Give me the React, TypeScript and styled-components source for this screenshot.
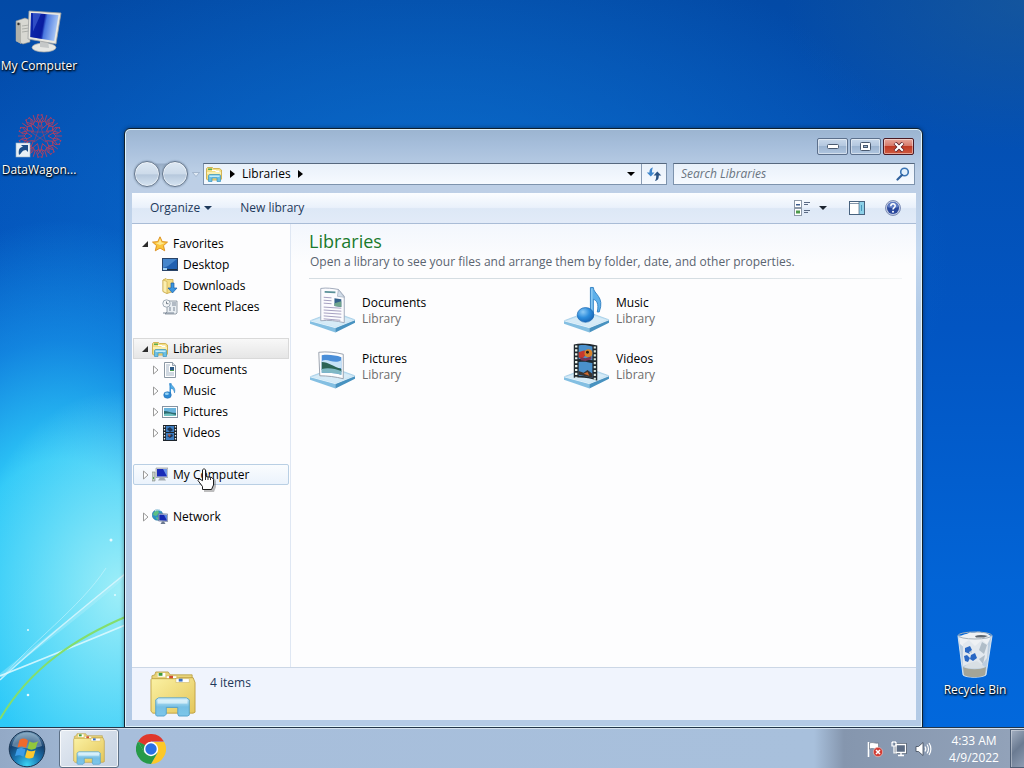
import React from "react";
import styled, { createGlobalStyle, css } from "styled-components";

const GlobalStyle = createGlobalStyle`
  *, *::before, *::after { box-sizing: border-box; }
  body {
    margin: 0;
    font-family: "Open Sans", "Noto Sans", sans-serif;
    font-size: 12px;
    line-height: 16px;
    color: #000;
  }
  button, input { font: inherit; color: inherit; }
  svg { display: block; flex: none; }
  ul { list-style: none; margin: 0; padding: 0; }
`;

/* ---------- desktop ---------- */

const Screen = styled.div`
  display: flex;
  flex-direction: column;
  min-height: 100vh;
`;

const Desktop = styled.main`
  position: relative;
  flex: 1;
  overflow: hidden;
  background:
    radial-gradient(ellipse 150px 200px at 120px 590px, rgba(170, 242, 248, 0.9), rgba(130, 232, 248, 0) 100%),
    radial-gradient(ellipse 260px 400px at 60px 620px, #2cccf8 0, rgba(48, 206, 250, 0.95) 40%, rgba(28, 160, 240, 0.6) 70%, rgba(16, 130, 226, 0) 100%),
    radial-gradient(ellipse 240px 150px at 100% 0, rgba(36, 96, 150, 0.5), rgba(20, 80, 150, 0) 100%),
    radial-gradient(ellipse 520px 340px at 42% 36%, rgba(14, 120, 212, 0.85), rgba(10, 100, 200, 0) 100%),
    linear-gradient(180deg, #034aa6 0%, #0350b4 20%, #0255c2 45%, #0264d6 80%, #0268dc 100%);
`;

const Streaks = styled.svg`
  position: absolute;
  left: 0;
  bottom: 0;
`;

const Shortcut = styled.a<{ $left?: string; $right?: string; $top?: string; $bottom?: string }>`
  position: absolute;
  left: ${(p) => p.$left ?? "auto"};
  right: ${(p) => p.$right ?? "auto"};
  top: ${(p) => p.$top ?? "auto"};
  bottom: ${(p) => p.$bottom ?? "auto"};
  display: flex;
  flex-direction: column;
  align-items: center;
  gap: 4px;
  width: 80px;
  color: #fff;
  text-decoration: none;
  white-space: nowrap;
  text-shadow: 0 1px 2px #000, 1px 1px 2px #000;
`;

/* ---------- explorer window ---------- */

const Window = styled.section`
  position: absolute;
  top: 128px;
  right: 101px;
  bottom: 0;
  left: 124px;
  display: flex;
  flex-direction: column;
  padding: 0 6px 7px 7px;
  border: 1px solid #10202e;
  border-radius: 6px 6px 0 0;
  background: linear-gradient(180deg, #9bb4d0 0, #a6bedb 16px, #bccfe6 44px, #bdcfe6 62px, #c3d8f0 120px, #b4cce8 180px, #b3cae6 100%);
  box-shadow: inset 0 0 0 1px #e0f4fc, 0 0 4px rgba(0, 0, 0, 0.4);
`;

const Caption = styled.header`
  display: flex;
  justify-content: flex-end;
  gap: 2px;
  padding: 9px 2px 0 0;
  height: 34px;
`;

const CaptionButton = styled.button<{ $close?: boolean }>`
  display: flex;
  align-items: center;
  justify-content: center;
  width: 31px;
  height: 17px;
  padding: 0;
  border: 1px solid ${(p) => (p.$close ? "#4a1a24" : "#5c708c")};
  border-radius: 2px;
  background: ${(p) =>
    p.$close
      ? "linear-gradient(180deg, #e8a89c 0, #d77a6a 45%, #c03a24 50%, #cf5a40 100%)"
      : "linear-gradient(180deg, #c8d8ea 0, #b4c8e0 45%, #9cb4d0 50%, #b0c6e0 100%)"};
  box-shadow: inset 0 0 0 1px rgba(255, 255, 255, 0.45);
`;

const NavRow = styled.div`
  display: flex;
  align-items: center;
  height: 22px;
  margin-bottom: 8px;
  padding-right: 1px;
`;

const TravelButtons = styled.div`
  display: flex;
  gap: 2px;
  margin-left: 2px;
  border-radius: 13px;
  background: linear-gradient(180deg, rgba(120, 142, 168, 0) 2px, rgba(120, 142, 168, 0.5) 3px, rgba(190, 206, 226, 0.4) 55%, rgba(190, 206, 226, 0) 80%);
`;

const TravelButton = styled.button`
  width: 26px;
  height: 26px;
  padding: 0;
  border: 1px solid #66788e;
  border-radius: 50%;
  background: linear-gradient(180deg, #dde8f3 0, #cddbea 48%, #b6c8dc 54%, #d6e4f2 100%);
  box-shadow: inset 0 0 0 1px rgba(255, 255, 255, 0.55), 0 0 2px #6d8098;
`;

const RecentButton = styled.button`
  display: flex;
  justify-content: center;
  width: 15px;
  padding: 0;
  border: 0;
  background: none;
`;

const field = css`
  display: flex;
  align-items: center;
  height: 22px;
  border: 1px solid #7d93ad;
  border-top-color: #56687e;
  background: linear-gradient(180deg, #e9f1fa, #f6faff);
`;

const AddressBar = styled.div`
  ${field}
  flex: 1;
  min-width: 0;
  padding-left: 2px;
`;

const Crumb = styled.button`
  padding: 0;
  border: 0;
  background: none;
  white-space: nowrap;
`;

const CrumbArrow = styled.button`
  display: flex;
  align-items: center;
  justify-content: center;
  width: 20px;
  height: 20px;
  padding: 0;
  border: 0;
  background: none;
`;

const Fill = styled.span`
  flex: 1;
`;

const RefreshButton = styled.button`
  display: flex;
  align-items: center;
  justify-content: center;
  width: 25px;
  height: 20px;
  padding: 0;
  border: 0;
  border-left: 1px solid #8a9cb4;
  background: none;
`;

const SearchBox = styled.label`
  ${field}
  width: 242px;
  margin-left: 6px;
  padding: 0 4px 0 7px;
`;

const SearchInput = styled.input`
  flex: 1;
  min-width: 0;
  padding: 0;
  border: 0;
  outline: 0;
  background: none;
  font-style: italic;
  &::placeholder { color: #6a7480; opacity: 1; }
`;

const Content = styled.div`
  flex: 1;
  display: flex;
  flex-direction: column;
  min-height: 0;
  background: #fdfdfe;
`;

const Toolbar = styled.div`
  display: flex;
  align-items: center;
  height: 31px;
  padding: 0 15px 0 18px;
  border-bottom: 1px solid #a9bcd6;
  background: linear-gradient(180deg, #fbfdff 0, #eaf1fb 48%, #dde8f6 52%, #e2ebf8 100%);
`;

const ToolButton = styled.button<{ $gap?: number }>`
  display: flex;
  align-items: center;
  gap: 4px;
  padding: 0;
  margin-left: ${(p) => p.$gap ?? 0}px;
  border: 0;
  background: none;
  color: #1e395b;
`;

const ViewButton = styled(ToolButton)`
  gap: 8px;
`;

const Panes = styled.div`
  flex: 1;
  display: flex;
  min-height: 0;
`;

const Sidebar = styled.nav`
  display: flex;
  flex-direction: column;
  gap: 21px;
  width: 159px;
  padding: 9px 1px;
  border-right: 1px solid #dfe7f3;
`;

const TreeRow = styled.button<{ $child?: boolean; $state?: "selected" | "hover" }>`
  display: flex;
  align-items: center;
  width: 100%;
  height: 21px;
  padding: 0 0 0 ${(p) => (p.$child ? 17 : 7)}px;
  border: 1px solid transparent;
  background: none;
  text-align: left;
  white-space: nowrap;
  ${(p) =>
    p.$state === "selected" &&
    css`
      border-color: #d9d9d9;
      background: linear-gradient(180deg, #f8f8f8, #e6e6e6);
    `}
  ${(p) =>
    p.$state === "hover" &&
    css`
      border-color: #b9cfe4;
      border-radius: 2px;
      background: linear-gradient(180deg, #fafcfe, #ebf3fc);
    `}
`;

const Twisty = styled.span`
  display: flex;
  width: 11px;
`;

const RowIcon = styled.span`
  display: flex;
  width: 21px;
`;

const Listing = styled.div`
  flex: 1;
  min-width: 0;
  padding: 6px 14px 0 18px;
  background: linear-gradient(180deg, #f3f7fd 0, #fdfdfe 40px);
`;

const Heading = styled.h1`
  margin: 0;
  font-size: 18px;
  font-weight: 400;
  line-height: 22px;
  color: #1a7a2c;
`;

const Blurb = styled.p`
  margin: 2px 0 0 1px;
  color: #5a6470;
`;

const Rule = styled.hr`
  height: 1px;
  margin: 8px 0 7px;
  border: 0;
  background: linear-gradient(90deg, #d5dde2, #d5dde2 70%, #f0f3f5);
`;

const Tiles = styled.ul`
  display: grid;
  grid-template-columns: repeat(auto-fill, 254px);
  grid-auto-rows: 56px;
`;

const Tile = styled.button`
  display: flex;
  gap: 6px;
  padding: 0;
  border: 0;
  background: none;
  text-align: left;
`;

const TileText = styled.span`
  display: flex;
  flex-direction: column;
  padding-top: 9px;
`;

const Muted = styled.span`
  color: #6d6d6d;
`;

const Details = styled.footer`
  display: flex;
  gap: 14px;
  height: 53px;
  padding: 3px 18px;
  border-top: 1px solid #ccd7e6;
  background: #f0f4fd;
  color: #1e395b;
  font-size: 12px;
  line-height: 24px;
`;

/* ---------- taskbar ---------- */

const Taskbar = styled.footer`
  display: flex;
  align-items: center;
  height: 40px;
  border-top: 1px solid #d3e0ee;
  box-shadow: 0 -1px 0 #22354a;
  background: linear-gradient(90deg, #93a9c6 0, #a7bedb 120px, #a8c0dc calc(100% - 210px), #8596ae calc(100% - 180px), #93a3ba 100%);
  z-index: 1;
`;

const StartButton = styled.button`
  display: flex;
  margin-left: 8px;
  padding: 0;
  border: 0;
  border-radius: 50%;
  background: none;
`;

const TaskButton = styled.button<{ $active?: boolean }>`
  display: flex;
  align-items: center;
  justify-content: center;
  width: 60px;
  height: 39px;
  padding: 0;
  border: 1px solid transparent;
  border-radius: 3px;
  background: none;
  ${(p) =>
    p.$active &&
    css`
      margin: 0 2px 0 13px;
      border-color: #5d7086;
      background: linear-gradient(135deg, #e6ecf3 0, #d5deea 45%, #c5d2e2 100%);
      box-shadow: inset 0 0 0 1px rgba(255, 255, 255, 0.75);
    `}
`;

const Tray = styled.div`
  display: flex;
  align-items: center;
  gap: 6px;
  margin-left: auto;
`;

const TrayButton = styled.button`
  display: flex;
  padding: 0;
  border: 0;
  background: none;
`;

const Clock = styled.time`
  width: 72px;
  color: #fff;
  text-align: center;
  line-height: 17px;
`;

const ShowDesktop = styled.button`
  align-self: stretch;
  width: 14px;
  padding: 0;
  border: 1px solid #4f5f76;
  border-right: 0;
  background: linear-gradient(135deg, #a4b0c2 0, #6b7b92 50%, #8d9cb2 100%);
  box-shadow: inset 1px 1px 0 rgba(255, 255, 255, 0.35);
`;

const Pointer = styled.svg`
  position: absolute;
  left: 197px;
  top: 467px;
`;

/* ---------- icons ---------- */

const ComputerIcon = () => (
  <svg width="48" height="44" viewBox="0 0 48 44" aria-hidden="true">
    <defs>
      <linearGradient id="scr" x1="0" y1="0.300" x2="1" y2="0.500">
        <stop offset="0" stopColor="#1232b4" />
        <stop offset="0.450" stopColor="#0a1fa0" />
        <stop offset="0.550" stopColor="#4a78e0" />
        <stop offset="1" stopColor="#b4d0f8" />
      </linearGradient>
    </defs>
    <path d="M1 11l9-3 5 2v22l-7 2-7-3z" fill="#d8d8d2" stroke="#8d8f8c" strokeWidth="0.600" />
    <path d="M1 11l5 2v21l-5-3z" fill="#b0b1ab" />
    <path d="M7 16l7-1M7 19l7-1M7 22l7-1" stroke="#9b9d9a" strokeWidth="0.700" />
    <circle cx="3.500" cy="14" r="1.200" fill="#333" />
    <ellipse cx="29" cy="37.500" rx="12" ry="4.500" fill="#e6e7e4" stroke="#a2a5a4" strokeWidth="0.700" />
    <path d="M25 29l8 1 1 8-9-1z" fill="#c5c8c8" />
    <path d="M14 1l32 2-5 31-28-5z" fill="#e9e8e2" stroke="#9da09f" strokeWidth="0.800" />
    <path d="M16 3l27.500 2-4.300 26-24-4z" fill="url(#scr)" />
    <path d="M30 4l-3 25-11-2V3z" fill="#0719a0" opacity="0.400" />
    <path d="M18 3l8 .6-8 18z" fill="#5a80e8" opacity="0.450" />
  </svg>
);

const WagonIcon = () => (
  <svg width="48" height="48" viewBox="0 0 48 48" aria-hidden="true">
    <g fill="none" stroke="#c43c58" strokeWidth="0.900" opacity="0.900">
      {Array.from({ length: 10 }, (_, i) => (
        <g key={i} transform={`rotate(${i * 36 + 18} 25 26)`}>
          <path d="M25 18l-3-5 1-4-3-4M25 18l3-5-1-4 3-4M17 9l5 4 3-3 3 3 5-4M25 10V4M19 6l2-1M31 6l-2-1" />
        </g>
      ))}
      <path d="M25 15l6 17-15-10h18L19 32z" strokeWidth="0.600" />
    </g>
    <rect x="1" y="33" width="14" height="14" fill="#e8f0f6" stroke="#9fb3c4" strokeWidth="0.600" />
    <path d="M4 45c-1-6 1-8 4-8l-2-2h7v7l-2-2c-4 0-4 3-7 5z" fill="#1c4f8a" />
  </svg>
);

const BinIcon = () => (
  <svg width="40" height="48" viewBox="0 0 40 48" aria-hidden="true">
    <path d="M3 6l5 39c3 3 19 3 23 0l6-39z" fill="#cbd6e0" fillOpacity="0.920" stroke="#eef4f8" strokeWidth="0.800" />
    <path d="M4 8c4-5 8-3 11-6 4 2 9-2 12 1 4-1 7 1 9 4l-4 8-5 4-8-3-8 3-6-5z" fill="#eef1f4" />
    <path d="M8 14l6-4 6 6 7-6 6 5-1 13-6 8-9-3-9 3z" fill="#e2e8ee" />
    <path d="M27 12l5 3-3 9-5-4zM10 20l5-3 2 6zM24 29l6-4-2 9z" fill="#b0bdc8" />
    <path d="M8 37c6 3 17 3 23 0l-1 8c-5 3-16 3-21 0z" fill="#a4a598" />
    <path d="M9 37c6 2 16 2 21 0l-8-6-8 2z" fill="#d8dfe4" />
    <path d="M10 18l5-2 2 4-3 2 1 2-5-2zM16 25l4-2 2 5-4 3-3-2zM9 26l3-1 3 3-2 4-3-1z" fill="#2a68c4" />
    <ellipse cx="20" cy="5.500" rx="17" ry="3.500" fill="none" stroke="#a4b0ba" strokeWidth="1" />
    <path d="M20 6c4-1.500 9-1 13 0l-4 1.500h-8z" fill="#5c6670" />
  </svg>
);

const FolderLibIcon = ({ size }: { size: number }) => (
  <svg width={size} height={size} viewBox="0 0 48 48" aria-hidden="true">
    <defs>
      <linearGradient id="fold" x1="0" y1="0" x2="1" y2="1">
        <stop offset="0" stopColor="#fbf2a4" />
        <stop offset="1" stopColor="#e4c65a" />
      </linearGradient>
      <linearGradient id="stand" x1="0" y1="0" x2="0" y2="1">
        <stop offset="0" stopColor="#d4f0fa" />
        <stop offset="0.500" stopColor="#76bfe4" />
        <stop offset="1" stopColor="#7cc6ea" />
      </linearGradient>
    </defs>
    <path d="M2 9V5l3-1 1-3h13l2 3h23v10z" fill="#e8d37a" stroke="#b59a3c" strokeWidth="0.800" />
    <path d="M8 2h8v4H8z" fill="#fff" />
    <rect x="9" y="2" width="4" height="3" fill="#3f9a3a" />
    <path d="M17 5h11v5H17z" fill="#fff" stroke="#c7ab50" strokeWidth="0.600" />
    <rect x="20" y="5" width="4" height="4" fill="#d24c30" />
    <path d="M2 8h24l4-1h15l2 5v31l-2 1H3l-2-2V9z" fill="url(#fold)" stroke="#bb9c3e" strokeWidth="0.900" />
    <path d="M27 8h14v4H27z" fill="#fff" stroke="#c7ab50" strokeWidth="0.500" />
    <rect x="30" y="8" width="4" height="3" fill="#3a6fc0" />
    <path d="M6 46V30l3-2h29l3 2v16l-2 1h-9l-1-2v-7H17v7l-2 2H7z" fill="url(#stand)" stroke="#4c9cc8" strokeWidth="0.900" />
    <path d="M8 30h31v4H8z" fill="#e6f7fc" opacity="0.700" />
  </svg>
);

const SmallFolderIcon = () => (
  <svg width="16" height="16" viewBox="0 0 16 16" aria-hidden="true">
    <path d="M.5 2.500l1-1h5l1 1h6l2 1.500v9l-1 1h-13l-1-1z" fill="#f4de84" stroke="#c9a63c" strokeWidth="0.800" />
    <path d="M2 2.500h4v1.500H2z" fill="#5cac50" />
    <path d="M6 4h4v1H6z" fill="#fff" />
    <path d="M9.500 4.500h4V6h-4z" fill="#fff" />
    <path d="M1 6h14v2H1z" fill="#fbf0b0" />
    <path d="M2.500 15.500v-6l1-1h10l1 1v6h-3.500V12h-5v3.500z" fill="#6cc0e4" stroke="#3a94c0" strokeWidth="0.700" />
    <path d="M3.500 9.500h10V11h-10z" fill="#c4ecf8" />
  </svg>
);

const StarIcon = () => (
  <svg width="16" height="16" viewBox="0 0 16 16" aria-hidden="true">
    <path d="M8 .8l2.200 4.800 5.300.5-4 3.500 1.200 5.200L8 12.100l-4.700 2.700 1.200-5.200-4-3.500 5.300-.5z" fill="#fbc63c" stroke="#d98a1a" strokeWidth="0.900" />
    <path d="M8 2.500l1.500 4 3.500.5-5 2-4.500-2 3-.5z" fill="#fee890" />
  </svg>
);

const MonitorIcon = () => (
  <svg width="16" height="16" viewBox="0 0 16 16" aria-hidden="true">
    <rect x="0.500" y="1.500" width="15" height="12" fill="#2160b0" stroke="#2a4468" />
    <path d="M1 2h14L6 9l-5 2z" fill="#4686cc" />
    <path d="M1 12h14v1H1z" fill="#1c2c40" />
    <path d="M1 11h4v2H1z" fill="#9fd0f4" />
  </svg>
);

const DownloadsIcon = () => (
  <svg width="16" height="16" viewBox="0 0 16 16" aria-hidden="true">
    <path d="M1 2l3-1.500 1 1h6v12l-6 2-4-2z" fill="#f3dc84" stroke="#c8a644" strokeWidth="0.800" />
    <path d="M1 2l4 1.500v12l-4-2z" fill="#fbeeb0" stroke="#c8a644" strokeWidth="0.600" />
    <path d="M9 5h3v5h3l-4.500 5L6 10h3z" fill="#3a96e0" stroke="#1c5ea8" strokeWidth="0.700" />
  </svg>
);

const RecentIcon = () => (
  <svg width="16" height="16" viewBox="0 0 16 16" aria-hidden="true">
    <path d="M5 2h10v12l-1 1H3l2-2z" fill="#e9eef2" stroke="#7f8c98" strokeWidth="0.800" />
    <path d="M10 4h4M10 6h4M7 9h2M11 9h2M7 11h2M11 11h2M1 14h11" stroke="#6d7c8c" strokeWidth="0.900" />
    <circle cx="4.500" cy="4.500" r="3.700" fill="#f4f6f8" stroke="#8c98a4" strokeWidth="0.800" />
    <path d="M4.500 2.500v2.200h2" fill="none" stroke="#55626e" strokeWidth="0.800" />
  </svg>
);

const DocIcon = () => (
  <svg width="16" height="16" viewBox="0 0 16 16" aria-hidden="true">
    <path d="M2.500.5h8l3 3v12h-11z" fill="#fff" stroke="#7f8c9a" strokeWidth="0.900" />
    <path d="M10.500.5v3h3" fill="#dde6ee" stroke="#7f8c9a" strokeWidth="0.800" />
    <path d="M4 3h4M4 5h3M4 7h3M4 9h3M4 11h8M4 13h8" stroke="#8ca0b4" strokeWidth="0.800" />
    <rect x="8" y="5" width="4" height="4" fill="#2c5a86" />
    <path d="M8 8h4v1H8z" fill="#4a9a50" />
  </svg>
);

const MusicIcon = () => (
  <svg width="16" height="16" viewBox="0 0 16 16" aria-hidden="true">
    <path d="M7.500.5h1.700c.3 3 4.800 3.500 3.300 9.300-.3-2.700-1.300-4-3.300-4.300z" fill="#56b2ea" stroke="#2a7cc0" strokeWidth="0.600" />
    <path d="M7.500 1h1.500v11H7.500z" fill="#3a94d8" />
    <ellipse cx="5.500" cy="12" rx="3.800" ry="3.300" fill="#2f8ad4" stroke="#1c64a8" strokeWidth="0.500" />
    <ellipse cx="4.800" cy="10.800" rx="2" ry="1.200" fill="#9ad4f4" />
  </svg>
);

const PictureIcon = () => (
  <svg width="16" height="16" viewBox="0 0 16 16" aria-hidden="true">
    <rect x="0.500" y="2.500" width="15" height="11" fill="#fff" stroke="#8593a2" />
    <rect x="2" y="4" width="12" height="8" fill="#6ab4dc" />
    <path d="M2 7c4 0 7 2 12 2v3H2z" fill="#2c6a70" />
    <path d="M2 10c5-1 8 0 12 1v1H2z" fill="#6fc0c0" />
  </svg>
);

const FilmIcon = () => (
  <svg width="16" height="16" viewBox="0 0 16 16" aria-hidden="true">
    <path d="M1 0h14v16H1z" fill="#1c242c" />
    <path d="M4 1h8v6H4zM4 8h8v7H4z" fill="#3c7cc0" />
    <path d="M5 4l3-2 3 3-3 2zM5 11l3 2 3-2-1-2z" fill="#1d3350" />
    <path d="M6 9l3 1-2 2z" fill="#c05a3a" />
    <path d="M2.500 1v15M13.500 1v15" stroke="#e8eef2" strokeWidth="1.300" strokeDasharray="1.500 1.500" />
  </svg>
);

const SmallComputerIcon = () => (
  <svg width="16" height="16" viewBox="0 0 16 16" aria-hidden="true">
    <path d="M0 5h3v9H0z" fill="#c9cfc8" stroke="#7d8680" strokeWidth="0.600" />
    <path d="M1 10h1v2H1z" fill="#50a850" />
    <path d="M4 1h12v9.500H4z" fill="#d4d8dc" stroke="#8a9096" strokeWidth="0.600" />
    <path d="M5 2h10v7.500H5z" fill="#1a2cb8" />
    <path d="M11 2h4v7.500z" fill="#6c94e8" />
    <path d="M8 10.500h4l2 3H6z" fill="#a4abb2" />
  </svg>
);

const NetworkIcon = () => (
  <svg width="16" height="16" viewBox="0 0 16 16" aria-hidden="true">
    <circle cx="5.500" cy="6" r="5.300" fill="#2c92c4" stroke="#1c6a98" strokeWidth="0.500" />
    <path d="M2 3l4-2 1 3-3 3-3-1zM4 8l3 1-2 2z" fill="#5cc084" />
    <path d="M3 2c2-1.500 4-1.500 6 0" stroke="#d8f4fc" strokeWidth="1" fill="none" />
    <path d="M6.500 4.500l9.200.5v7.500l-9.200-.5z" fill="#c8d0dc" stroke="#5a6a8a" strokeWidth="0.600" />
    <path d="M7.300 5.500l7.600.4v5.800l-7.600-.4z" fill="#1428b0" />
    <path d="M12 6h3v5.500z" fill="#5a84e0" />
    <path d="M10 12.500h2l1.500 2.500h-5z" fill="#6a7890" />
  </svg>
);

const Base = () => (
  <>
    <path d="M1 35l24-9 22 8-20 11z" fill="#c4e2f4" stroke="#8cc0de" strokeWidth="0.600" />
    <path d="M1 35l26 7v5L1 38z" fill="#84bfe2" />
    <path d="M27 42l20-8v3L27 47z" fill="#4892c0" />
    <path d="M4 35l21-7 19 6-17 7z" fill="#d6ebf7" />
    <path d="M1 35l26 7 20-8" fill="none" stroke="#f2fafe" strokeWidth="0.800" />
  </>
);

const DocumentsTile = () => (
  <svg width="47" height="48" viewBox="0 0 48 48" aria-hidden="true">
    <Base />
    <path d="M12 2c6-1 12 0 18 1l6 7v27c-8-2-16-3-24-2z" fill="#fbfbfe" stroke="#97a2b4" strokeWidth="0.900" />
    <path d="M30 3l6 8-7-1z" fill="#d3deea" stroke="#97a2b4" strokeWidth="0.600" />
    <path d="M16 5.500l11 .5" stroke="#5a9098" strokeWidth="1.600" />
    <path d="M15 11l8 .6M15 14l8 .6M15 17l8 .6M15 21l18 1.200M15 24l18 1.200M15 27l18 1.200M15 30l18 1.500M15 33l17 1.500" stroke="#9a94b8" strokeWidth="0.900" />
    <path d="M26 12l7 1v8l-7-1z" fill="#33608a" />
    <path d="M26 17l7-2v6l-7-1z" fill="#6fa48c" />
  </svg>
);

const MusicTile = () => (
  <svg width="47" height="48" viewBox="0 0 48 48" aria-hidden="true">
    <defs>
      <radialGradient id="note" cx="0.350" cy="0.300" r="0.800">
        <stop offset="0" stopColor="#8ccaf6" />
        <stop offset="0.500" stopColor="#2c8cdc" />
        <stop offset="1" stopColor="#1560b0" />
      </radialGradient>
    </defs>
    <Base />
    <path d="M28 1h3c0 7 12 9 6 25h-2c2-9-1-12-4-13v18h-3z" fill="#5eb0ea" stroke="#2b7cc0" strokeWidth="0.900" />
    <path d="M29 2h1v26h-1z" fill="#a6d8f8" />
    <ellipse cx="23" cy="29" rx="8.500" ry="7.500" fill="url(#note)" stroke="#1c66b0" strokeWidth="0.700" />
  </svg>
);

const PicturesTile = () => (
  <svg width="47" height="48" viewBox="0 0 48 48" aria-hidden="true">
    <Base />
    <path d="M10 10c8-1 17 0 25 2v25c-8-2-16-3-24-3z" fill="#fdfdfe" stroke="#8f99a6" strokeWidth="0.900" />
    <path d="M13 13c7-1 14 0 20 2v18c-7-2-13-2-20-2z" fill="#4a8ed8" />
    <path d="M13 19c6-4 12 4 20-1v8H13z" fill="#c6e2f6" />
    <path d="M13 20c7 0 12 5 20 7v3l-20-2z" fill="#2c6454" />
    <path d="M13 27c7-2 14 0 20 2v4c-7-2-13-2-20-2z" fill="#7fb8c4" />
  </svg>
);

const VideosTile = () => (
  <svg width="47" height="48" viewBox="0 0 48 48" aria-hidden="true">
    <Base />
    <path d="M11 2c7-2 16-1 24 1v36c-8-3-16-4-24-3z" fill="#20282e" />
    <path d="M16 3c5-1 10 0 14 1v14c-5-1-9-2-14-1z" fill="#4a90cc" />
    <path d="M16 20c5-1 10 0 14 1v15c-5-1-9-2-14-2z" fill="#4a90cc" />
    <path d="M16 10l6-2 1 5-4 4-3-2z" fill="#c8382c" />
    <circle cx="26" cy="11" r="4" fill="#d8842c" />
    <path d="M16 29l5 2 4-3 5 4v4l-14-3z" fill="#3a3430" />
    <path d="M21 32l4-2 2 4z" fill="#d06a30" />
    <circle cx="25" cy="10" r="1.500" fill="#241c18" />
    <path d="M18 15l5 1 6-2v3l-6 2-5-1z" fill="#7a3454" />
    <path d="M13.500 3v33" stroke="#eef6ee" strokeWidth="2.400" strokeDasharray="2.200 1.800" />
    <path d="M32.500 4v34" stroke="#dce8e0" strokeWidth="2.200" strokeDasharray="2.200 1.800" />
  </svg>
);

const DownArrow = ({ color = "#1e395b" }: { color?: string }) => (
  <svg width="8" height="4" viewBox="0 0 8 4" aria-hidden="true">
    <path d="M0 0h8L4 4z" fill={color} />
  </svg>
);

const RightArrow = () => (
  <svg width="5" height="8" viewBox="0 0 5 8" aria-hidden="true">
    <path d="M0 0l5 4-5 4z" fill="#000" />
  </svg>
);

const TwistyIcon = ({ open }: { open: boolean }) => (
  <svg width="8" height="10" viewBox="0 0 8 10" aria-hidden="true">
    {open ? (
      <path d="M7 2v6H1z" fill="#2c2c2c" />
    ) : (
      <path d="M2.500 1v8L7 5z" fill="#fff" stroke="#9a9a9a" />
    )}
  </svg>
);

const RefreshIcon = () => (
  <svg width="16" height="16" viewBox="0 0 16 16" aria-hidden="true">
    <path d="M7 1.500C4 2 3.500 4 3.500 6.500H.8l4 4 3.700-4H6c0-2.500.2-3.500 1-5z" fill="#3f86cc" />
    <path d="M9 15c3.200-.5 3.800-2.500 3.800-5.500h2.500l-4-4-3.700 4H10.200c0 2.500-.3 4-1.200 5.500z" fill="#2c5484" />
  </svg>
);

const LensIcon = () => (
  <svg width="14" height="14" viewBox="0 0 14 14" aria-hidden="true">
    <circle cx="8.500" cy="5" r="3.800" fill="#e2f0fc" stroke="#3a74b4" strokeWidth="1.600" />
    <path d="M6 8l-4.500 4.500" stroke="#2f609c" strokeWidth="2.200" strokeLinecap="round" />
  </svg>
);

const ViewIcon = () => (
  <svg width="17" height="16" viewBox="0 0 17 16" aria-hidden="true">
    <rect x="0.500" y="0.500" width="7" height="7" fill="#fff" stroke="#8c98a8" />
    <rect x="0.500" y="8.500" width="7" height="7" fill="#fff" stroke="#8c98a8" />
    <path d="M2 4h4v1.500H2z" fill="#3c5c8c" />
    <path d="M2 10.500h4v3H2z" fill="#4e9a4c" />
    <path d="M10 2.500h6M10 4.500h4M10 10.500h6M10 12.500h4" stroke="#5a6a84" />
  </svg>
);

const PreviewIcon = () => (
  <svg width="16" height="14" viewBox="0 0 16 14" aria-hidden="true">
    <rect x="0.500" y="0.500" width="15" height="13" fill="#fff" stroke="#48627e" />
    <path d="M1 2.500h14" stroke="#8496aa" />
    <rect x="10" y="1" width="5" height="12" fill="#8cd0e8" />
    <path d="M10 1v12" stroke="#48627e" strokeWidth="0.700" />
    <path d="M12.500 4v6" stroke="#4a98bc" />
  </svg>
);

const HelpIcon = () => (
  <svg width="16" height="16" viewBox="0 0 16 16" aria-hidden="true">
    <circle cx="8" cy="8" r="7.500" fill="#c0cae2" stroke="#6a7ba8" strokeWidth="0.800" />
    <circle cx="8" cy="8" r="6" fill="#2a489c" />
    <path d="M2.500 7a5.500 5 0 0 1 11 0c-3 1.500-8 1.500-11 0z" fill="#5f7cc4" />
    <path d="M5.800 6.200C5.800 3 10.300 3.200 10.200 6 10.100 7.600 8 7.600 8 9.600" fill="none" stroke="#fff" strokeWidth="1.500" />
    <circle cx="8" cy="11.700" r="1" fill="#fff" />
  </svg>
);

const StartOrb = () => (
  <svg width="38" height="38" viewBox="0 0 38 38" aria-hidden="true">
    <defs>
      <radialGradient id="orb" cx="0.500" cy="0.950" r="0.900">
        <stop offset="0" stopColor="#3cd4f4" />
        <stop offset="0.400" stopColor="#1a78b4" />
        <stop offset="0.750" stopColor="#15406e" />
        <stop offset="1" stopColor="#5c86a8" />
      </radialGradient>
    </defs>
    <circle cx="19" cy="19" r="17.800" fill="url(#orb)" stroke="#1b3654" strokeWidth="1" />
    <path d="M4 16C6 6 12 2.500 19 2.500S32 6 34 16c-8 3-22 3-30 0z" fill="#cfe4f0" opacity="0.380" />
    <path d="M11.500 10c3-2 6-2 8.500.7L18 18c-3-2-5.500-2-8.500-.5z" fill="#ef6a2c" />
    <path d="M21.500 11.300c2.500 1.800 5 2 9-.3-1.500 2-2 5-2.800 7.500-3 1.500-5.500 1.500-8.200 0z" fill="#92c83c" />
    <path d="M9 19c3-1.500 5.500-1.500 8.500.5l-2 7.300c-2.500-2-5.500-2-8.500-.8z" fill="#3c9ce8" />
    <path d="M19 20c2.700 1.500 5.500 1.700 8.500.2l-2.200 7.300c-3 1.500-5.800 1.200-8.300-.3z" fill="#fcc830" />
  </svg>
);

const ChromeIcon = () => (
  <svg width="30" height="30" viewBox="0 0 30 30" aria-hidden="true">
    <path d="M15 15L2 7.500A15 15 0 0 1 28 7.500H15z" fill="#e0382c" />
    <path d="M15 15L28 7.500A15 15 0 0 1 15 30l6.500-11.200z" fill="#fcc828" />
    <path d="M15 15l6.500 3.800L15 30A15 15 0 0 1 2 7.500l6.500 11.300z" fill="#269a48" />
    <path d="M15 8h13.200L21 19z" fill="#fcc828" />
    <path d="M8.500 18.700L2 7.500 9 11z" fill="#269a48" />
    <circle cx="15" cy="15" r="7.200" fill="#fff" />
    <circle cx="15" cy="15" r="5.700" fill="#2a70e4" />
  </svg>
);

const FlagIcon = () => (
  <svg width="18" height="18" viewBox="0 0 18 18" aria-hidden="true">
    <path d="M2.500 2v15" stroke="#fff" strokeWidth="1.600" />
    <path d="M3.500 3c4-1.500 5 1 9 0v6c-4 1-5-1.500-9 0z" fill="#fff" stroke="#4c5868" strokeWidth="0.500" />
    <circle cx="12" cy="12" r="4.700" fill="#d23c34" stroke="#f0d0cc" strokeWidth="0.600" />
    <path d="M10 10l4 4M14 10l-4 4" stroke="#fff" strokeWidth="1.500" />
  </svg>
);

const LanIcon = () => (
  <svg width="18" height="18" viewBox="0 0 18 18" aria-hidden="true">
    <path d="M6 4.500h9.500v8H6z" fill="#5c6c84" stroke="#3c4858" strokeWidth="2.600" />
    <path d="M6 4.500h9.500v8H6z" fill="#5c6c84" stroke="#fff" strokeWidth="1.300" />
    <path d="M8 15.500h6M11 13v3" stroke="#fff" strokeWidth="1.400" />
    <path d="M2 2v4h4V2M4 6v7h3M3 1v2M5 1v2" fill="none" stroke="#fff" strokeWidth="1.200" />
  </svg>
);

const SpeakerIcon = () => (
  <svg width="18" height="18" viewBox="0 0 18 18" aria-hidden="true">
    <path d="M2 6.500h2.500L9 2.500v13l-4.500-4H2z" fill="#fff" stroke="#3c4858" strokeWidth="0.800" />
    <path d="M11 6.500c1 1.500 1 3.500 0 5M13 4.500c2 2.500 2 6.500 0 9M15 3c2.500 3.500 2.500 8.500 0 12" fill="none" stroke="#fff" strokeWidth="1.200" />
  </svg>
);

/* ---------- data ---------- */

type TreeNode = {
  label: string;
  icon: React.ReactNode;
  open?: boolean;
  arrow?: boolean;
  state?: "selected" | "hover";
  children?: TreeNode[];
};

const tree: TreeNode[] = [
  {
    label: "Favorites",
    icon: <StarIcon />,
    open: true,
    arrow: true,
    children: [
      { label: "Desktop", icon: <MonitorIcon /> },
      { label: "Downloads", icon: <DownloadsIcon /> },
      { label: "Recent Places", icon: <RecentIcon /> },
    ],
  },
  {
    label: "Libraries",
    icon: <SmallFolderIcon />,
    open: true,
    arrow: true,
    state: "selected",
    children: [
      { label: "Documents", icon: <DocIcon />, arrow: true },
      { label: "Music", icon: <MusicIcon />, arrow: true },
      { label: "Pictures", icon: <PictureIcon />, arrow: true },
      { label: "Videos", icon: <FilmIcon />, arrow: true },
    ],
  },
  { label: "My Computer", icon: <SmallComputerIcon />, arrow: true, state: "hover" },
  { label: "Network", icon: <NetworkIcon />, arrow: true },
];

const libraries = [
  { label: "Documents", icon: <DocumentsTile /> },
  { label: "Music", icon: <MusicTile /> },
  { label: "Pictures", icon: <PicturesTile /> },
  { label: "Videos", icon: <VideosTile /> },
];

const TreeItem = ({ node, child }: { node: TreeNode; child?: boolean }) => (
  <li>
    <TreeRow type="button" $child={child} $state={node.state}>
      <Twisty>{node.arrow && <TwistyIcon open={!!node.open} />}</Twisty>
      <RowIcon>{node.icon}</RowIcon>
      {node.label}
    </TreeRow>
    {node.children && (
      <ul>
        {node.children.map((n) => (
          <TreeItem key={n.label} node={n} child />
        ))}
      </ul>
    )}
  </li>
);

export default function App() {
  return (
    <Screen>
      <GlobalStyle />
      <Desktop>
        <Streaks width="240" height="240" viewBox="0 0 240 240" aria-hidden="true">
          <g fill="none">
            <path d="M0 188C40 155 90 120 130 82" stroke="#b8f2fc" strokeWidth="4" opacity="0.350" />
            <path d="M0 192C30 155 80 120 106 80" stroke="#d8f8ff" strokeWidth="1" opacity="0.500" />
            <path d="M0 192C40 155 80 122 130 82" stroke="#e6faff" strokeWidth="1.500" opacity="0.700" />
            <path d="M0 188C50 168 90 152 130 135" stroke="#e0faff" strokeWidth="1.800" opacity="0.850" />
            <path d="M0 231C30 180 75 150 130 127" stroke="#84de6c" strokeWidth="2" />
          </g>
          <g fill="#e6fbff">
            <circle cx="111" cy="52" r="1.500" />
            <circle cx="28" cy="142" r="1" />
            <circle cx="28" cy="207" r="1.300" />
            <circle cx="115" cy="107" r="1" />
          </g>
        </Streaks>

        <Shortcut href="#computer" $left="-1px" $top="10px">
          <ComputerIcon />
          My Computer
        </Shortcut>
        <Shortcut href="#datawagon" $left="-1px" $top="110px">
          <WagonIcon />
          DataWagon...
        </Shortcut>
        <Shortcut href="#bin" $right="9px" $bottom="30px">
          <BinIcon />
          Recycle Bin
        </Shortcut>

        <Window aria-label="Libraries">
          <Caption>
            <CaptionButton type="button" aria-label="Minimize">
              <svg width="12" height="5" viewBox="0 0 12 5" aria-hidden="true">
                <rect x="0.500" y="0.500" width="11" height="4" rx="1" fill="#fff" stroke="#4a5a70" />
              </svg>
            </CaptionButton>
            <CaptionButton type="button" aria-label="Maximize">
              <svg width="11" height="9" viewBox="0 0 11 9" aria-hidden="true">
                <rect x="0.500" y="0.500" width="10" height="8" rx="1" fill="#fff" stroke="#4a5a70" />
                <rect x="3.500" y="3.500" width="4" height="2" fill="#9cb4d0" stroke="#4a5a70" />
              </svg>
            </CaptionButton>
            <CaptionButton type="button" aria-label="Close" $close>
              <svg width="12" height="10" viewBox="0 0 12 10" aria-hidden="true">
                <path d="M2 1l8 8M10 1L2 9" stroke="#5a2028" strokeWidth="3.800" />
                <path d="M2.200 1.200l7.600 7.600M9.800 1.200L2.200 8.800" stroke="#fff" strokeWidth="2.200" />
              </svg>
            </CaptionButton>
          </Caption>

          <NavRow>
            <TravelButtons>
              <TravelButton type="button" aria-label="Back" />
              <TravelButton type="button" aria-label="Forward" />
            </TravelButtons>
            <RecentButton type="button" aria-label="Recent pages">
              <svg width="8" height="5" viewBox="0 0 8 5" aria-hidden="true">
                <path d="M.5.500h7L4 4.500z" fill="#dfe9f4" stroke="#92a6c0" strokeWidth="0.700" />
              </svg>
            </RecentButton>
            <AddressBar>
              <SmallFolderIcon />
              <CrumbArrow type="button" aria-label="Root">
                <RightArrow />
              </CrumbArrow>
              <Crumb type="button">Libraries</Crumb>
              <CrumbArrow type="button" aria-label="Browse Libraries">
                <RightArrow />
              </CrumbArrow>
              <Fill />
              <CrumbArrow type="button" aria-label="Previous locations">
                <DownArrow color="#000" />
              </CrumbArrow>
              <RefreshButton type="button" aria-label="Refresh">
                <RefreshIcon />
              </RefreshButton>
            </AddressBar>
            <SearchBox>
              <SearchInput type="text" placeholder="Search Libraries" aria-label="Search Libraries" />
              <LensIcon />
            </SearchBox>
          </NavRow>

          <Content>
            <Toolbar>
              <ToolButton type="button">
                Organize <DownArrow />
              </ToolButton>
              <ToolButton type="button" $gap={28}>
                New library
              </ToolButton>
              <Fill />
              <ViewButton type="button" aria-label="Change your view">
                <ViewIcon />
                <DownArrow color="#1c2430" />
              </ViewButton>
              <ToolButton type="button" aria-label="Show the preview pane" $gap={22}>
                <PreviewIcon />
              </ToolButton>
              <ToolButton type="button" aria-label="Get help" $gap={20}>
                <HelpIcon />
              </ToolButton>
            </Toolbar>

            <Panes>
              <Sidebar aria-label="Navigation pane">
                {tree.map((n) => (
                  <ul key={n.label}>
                    <TreeItem node={n} />
                  </ul>
                ))}
              </Sidebar>
              <Listing>
                <Heading>Libraries</Heading>
                <Blurb>Open a library to see your files and arrange them by folder, date, and other properties.</Blurb>
                <Rule />
                <Tiles>
                  {libraries.map((l) => (
                    <li key={l.label}>
                      <Tile type="button">
                        {l.icon}
                        <TileText>
                          <span>{l.label}</span>
                          <Muted>Library</Muted>
                        </TileText>
                      </Tile>
                    </li>
                  ))}
                </Tiles>
              </Listing>
            </Panes>

            <Details>
              <FolderLibIcon size={46} />
              4 items
            </Details>
          </Content>
        </Window>

        <Pointer width="19" height="25" viewBox="0 0 19 25" aria-hidden="true">
          <path d="M6 24v-3L1 15l1-2 4 2V3l1.500-1.500L9 3v6l8 2 1 2v6l-2 5z" fill="#000" opacity="0.250" transform="translate(1 1)" />
          <path d="M5.500 22.500v-3L1 13.500l1-1.800 3.500 2V3L7 1.500 8.500 3v6.500l6.500 1 1.500 2V18l-2 4.500z" fill="#fff" stroke="#1c1c1c" />
          <path d="M8.500 9.500V13M11 10v3M13.500 10.500V13" stroke="#1c1c1c" strokeWidth="0.900" />
        </Pointer>
      </Desktop>

      <Taskbar>
        <StartButton type="button" aria-label="Start">
          <StartOrb />
        </StartButton>
        <TaskButton type="button" aria-label="Windows Explorer" $active>
          <FolderLibIcon size={32} />
        </TaskButton>
        <TaskButton type="button" aria-label="Chrome">
          <ChromeIcon />
        </TaskButton>
        <Tray>
          <TrayButton type="button" aria-label="Action Center">
            <FlagIcon />
          </TrayButton>
          <TrayButton type="button" aria-label="Network">
            <LanIcon />
          </TrayButton>
          <TrayButton type="button" aria-label="Volume">
            <SpeakerIcon />
          </TrayButton>
          <Clock dateTime="2022-04-09T04:33">
            4:33 AM
            <br />
            4/9/2022
          </Clock>
        </Tray>
        <ShowDesktop type="button" aria-label="Show desktop" />
      </Taskbar>
    </Screen>
  );
}
